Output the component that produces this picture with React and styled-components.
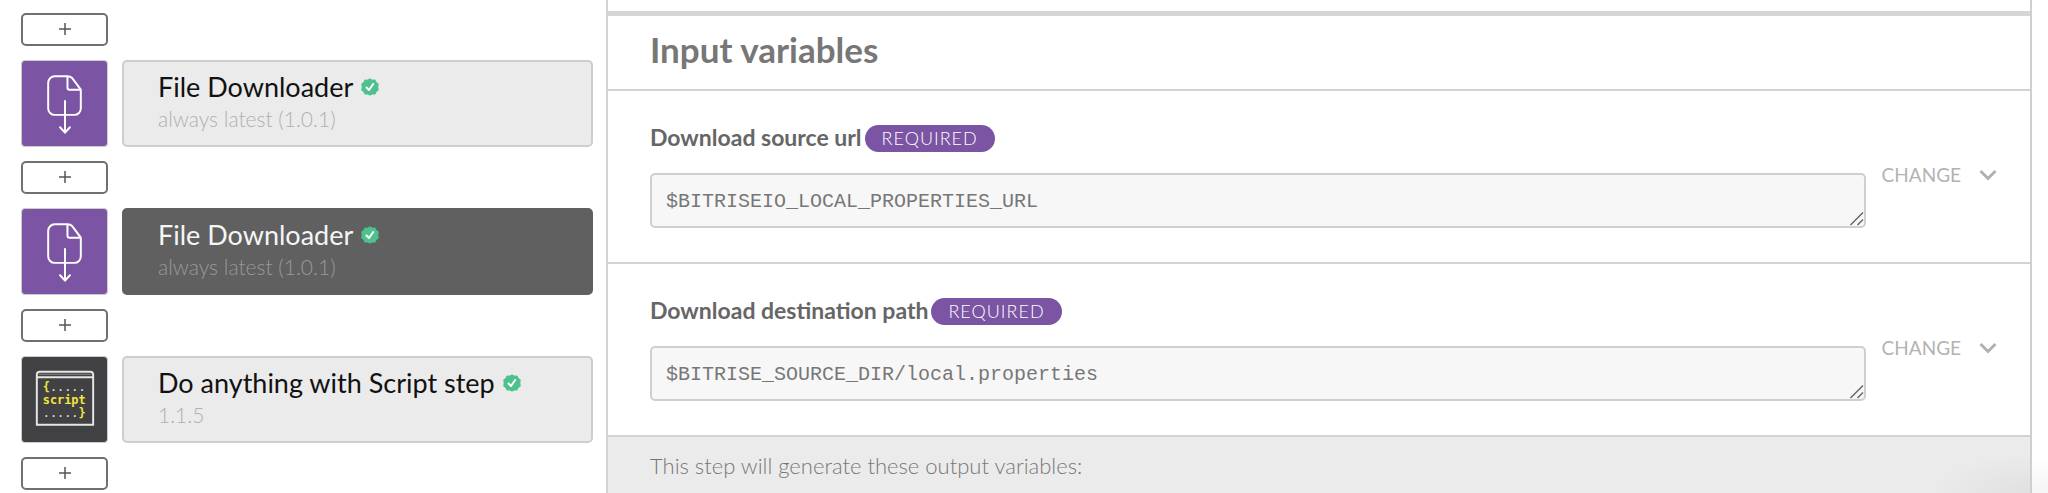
import React, { useState } from 'react'
import styled, { createGlobalStyle } from 'styled-components'

const steps = [
  { id: 1, title: 'File Downloader', version: 'always latest (1.0.1)', icon: 'file' },
  { id: 2, title: 'File Downloader', version: 'always latest (1.0.1)', icon: 'file' },
  { id: 3, title: 'Do anything with Script step', version: '1.1.5', icon: 'script' },
]

const inputs = [
  { id: 'source-url', label: 'Download source url', value: '$BITRISEIO_LOCAL_PROPERTIES_URL' },
  { id: 'destination-path', label: 'Download destination path', value: '$BITRISE_SOURCE_DIR/local.properties' },
]

const FileIcon = () => (
  <svg viewBox='0 0 86 86' fill='none' stroke='#fff' strokeWidth='2' strokeLinecap='round' strokeLinejoin='round'>
    <path d='M46 15.500H33a6.500 6.500 0 0 0-6.500 6.500v26a6.500 6.500 0 0 0 6.500 6.500h20a6.500 6.500 0 0 0 6.500-6.500V29L51 17.500Q49 15.500 46 15.500V27a2 2 0 0 0 2 2h11' />
    <path d='M43.500 40.500V72M38.500 67l5 5.500 5-5.500' />
  </svg>
)

const ScriptIcon = () => (
  <svg viewBox='0 0 86 86' fill='none'>
    <path d='M15 68.500V18a3 3 0 0 1 3-3h51a3 3 0 0 1 3 3v50.500z' stroke='#e6e6e6' strokeWidth='2' />
    <path d='M15 20.500h57' stroke='#e6e6e6' strokeWidth='2' />
    <path d='M17 17.500h53' stroke='#8a8a8a' />
    <g fontFamily='"DejaVu Sans Mono", monospace' fontSize='12' fontWeight='700' fill='#f4e63d'>
      <text x='21' y='34'>{'{'}<tspan fill='#e6e6e6' fontWeight='400'>.....</tspan></text>
      <text x='21' y='48'>script</text>
      <text x='21' y='61'><tspan fill='#e6e6e6' fontWeight='400'>.....</tspan>{'}'}</text>
    </g>
  </svg>
)

const VerifiedIcon = () => (
  <svg width='18' height='18' viewBox='0 0 18 18' fill='none'>
    <path
      d='M9 1.200l2.300 1.200 2.600-.2 1 2.400 2.100 1.500-.5 2.900.5 2.900-2.100 1.500-1 2.400-2.600-.2L9 16.800l-2.300-1.200-2.600.2-1-2.400L1 11.900 1.500 9 1 6.100l2.100-1.500 1-2.400 2.600.2z'
      fill='#4fc18e' stroke='#4fc18e' strokeWidth='1.500' strokeLinejoin='round'
    />
    <path d='M5.500 9.500l2.500 2.500 4.200-6' stroke='#fff' strokeWidth='2' strokeLinecap='round' strokeLinejoin='round' />
  </svg>
)

const App = () => {
  const [selected, setSelected] = useState(2)

  return (
    <Page>
      <GlobalStyle />
      <Workflow>
        <AddButton aria-label='Add step'><PlusIcon /></AddButton>
        {steps.map((step) => {
          const { id, title, version, icon } = step
          return (
            <React.Fragment key={id}>
              <StepRow>
                <StepIcon $dark={icon === 'script'}>
                  {icon === 'script' ? <ScriptIcon /> : <FileIcon />}
                </StepIcon>
                <StepCard $active={id === selected} onClick={() => setSelected(id)}>
                  <StepTitle>{title} <VerifiedIcon /></StepTitle>
                  <StepVersion $active={id === selected}>{version}</StepVersion>
                </StepCard>
              </StepRow>
              <AddButton aria-label='Add step'><PlusIcon /></AddButton>
            </React.Fragment>
          )
        })}
      </Workflow>
      <Panel>
        <PanelHeader>
          <h2>Input variables</h2>
        </PanelHeader>
        {inputs.map(({ id, label, value }) => (
          <InputRow key={id}>
            <Field>
              <FieldHeader>
                <label htmlFor={id}>{label}</label>
                <Badge>REQUIRED</Badge>
              </FieldHeader>
              <TextArea id={id} rows={1} defaultValue={value} spellCheck={false} />
            </Field>
            <ChangeButton>
              CHANGE
              <svg width='18' height='12' viewBox='0 0 18 12' fill='none' stroke='#b0b0b0' strokeWidth='3'>
                <path d='M1.500 2L9 9.500 16.500 2' />
              </svg>
            </ChangeButton>
          </InputRow>
        ))}
        <Outputs>This step will generate these output variables:</Outputs>
      </Panel>
    </Page>
  )
}

const PlusIcon = () => (
  <svg width='12' height='12' viewBox='0 0 12 12' stroke='#555' strokeWidth='1.500'>
    <path d='M6 0v12M0 6h12' />
  </svg>
)

const GlobalStyle = createGlobalStyle`
  * {
    box-sizing: border-box;
  }
  body {
    margin: 0;
    background: #fff;
    font-family: Lato, 'Liberation Sans', sans-serif;
  }
  button {
    font-family: inherit;
    cursor: pointer;
  }
`

const Page = styled.div`
  display: flex;
  min-height: 100vh;
  padding-right: 16px;
  background: radial-gradient(ellipse 90px 36px at 100% 100%, #f4f4f4, #fff);
`

const Workflow = styled.section`
  display: flex;
  flex-direction: column;
  align-items: flex-start;
  gap: 14px;
  flex: 0 0 606px;
  padding: 13px 13px 3px 21px;
  background: #fff;
`

const AddButton = styled.button`
  display: flex;
  align-items: center;
  justify-content: center;
  width: 87px;
  height: 33px;
  padding: 0 0 2px;
  background: #fff;
  border: 2px solid #707070;
  border-radius: 5px;
`

const StepRow = styled.div`
  display: flex;
  gap: 14px;
  width: 100%;
`

const StepIcon = styled.div`
  flex: 0 0 87px;
  height: 87px;
  border: 1px solid #ccc;
  border-radius: 4px;
  background: ${({ $dark }) => ($dark ? '#414143' : '#7b54a3')};
  svg {
    display: block;
  }
`

const StepCard = styled.button`
  flex: 1;
  padding: 0 0 2px 34px;
  text-align: left;
  color: ${({ $active }) => ($active ? '#f5f5f5' : '#111')};
  background: ${({ $active }) => ($active ? '#606060' : '#ebebeb')};
  border: 2px solid ${({ $active }) => ($active ? '#606060' : '#cdcdcd')};
  border-radius: 5px;
`

const StepTitle = styled.span`
  display: flex;
  align-items: center;
  gap: 8px;
  font-size: 27px;
  line-height: 32px;
`

const StepVersion = styled.span`
  display: block;
  font-size: 21px;
  font-weight: 300;
  line-height: 32px;
  color: ${({ $active }) => ($active ? '#999' : '#b0b0b0')};
`

const Panel = styled.main`
  flex: 1;
  display: flex;
  flex-direction: column;
  padding-top: 11px;
  background: #fff;
  border-left: 2px solid #d2d2d2;
  border-right: 2px solid #cfcfcf;
`

const PanelHeader = styled.header`
  padding: 13px 42px 20px;
  border-top: 5px solid #d6d6d6;
  border-bottom: 2px solid #d2d2d2;
  h2 {
    margin: 0;
    font-size: 35px;
    line-height: 40px;
    color: #777;
  }
`

const InputRow = styled.div`
  display: flex;
  align-items: center;
  gap: 16px;
  padding: 34px 33px 34px 42px;
  border-bottom: 2px solid #d2d2d2;
`

const Field = styled.div`
  flex: 1;
  display: flex;
  flex-direction: column;
  gap: 21px;
`

const FieldHeader = styled.div`
  display: flex;
  align-items: center;
  gap: 3px;
  label {
    padding-bottom: 2px;
    font-size: 23px;
    font-weight: 700;
    line-height: 25px;
    color: #666;
  }
`

const Badge = styled.span`
  padding: 0 17px;
  font-size: 18px;
  font-weight: 300;
  line-height: 27px;
  letter-spacing: 1px;
  color: #fff;
  background: #7b54a3;
  border-radius: 14px;
`

const resizeGrip = `url("data:image/svg+xml,%3Csvg xmlns='http://www.w3.org/2000/svg' width='15' height='15' fill='none' stroke='%23666' stroke-width='1.500'%3E%3Cpath d='M1.500 14L14 1.500M8.500 14L14 8.500'/%3E%3C/svg%3E")`

const TextArea = styled.textarea`
  display: block;
  height: 55px;
  padding: 12px 14px;
  overflow: hidden;
  resize: vertical;
  font-family: 'Liberation Mono', monospace;
  font-size: 20px;
  line-height: 30px;
  color: #777;
  background: #f7f7f7;
  border: 2px solid #cfcfcf;
  border-radius: 5px;
  &::-webkit-resizer {
    background: ${resizeGrip} no-repeat right bottom;
  }
`

const ChangeButton = styled.button`
  display: flex;
  align-items: center;
  gap: 18px;
  padding: 0 0 4px;
  font-size: 19px;
  line-height: 24px;
  color: #b3b3b3;
  background: none;
  border: 0;
`

const Outputs = styled.p`
  flex: 1;
  margin: 0;
  padding: 15px 42px 14px;
  font-size: 22px;
  font-weight: 300;
  line-height: 28px;
  color: #777;
  background: radial-gradient(ellipse 100px 40px at 100% 100%, #e0e0e0, #ebebeb);
`

export default App
